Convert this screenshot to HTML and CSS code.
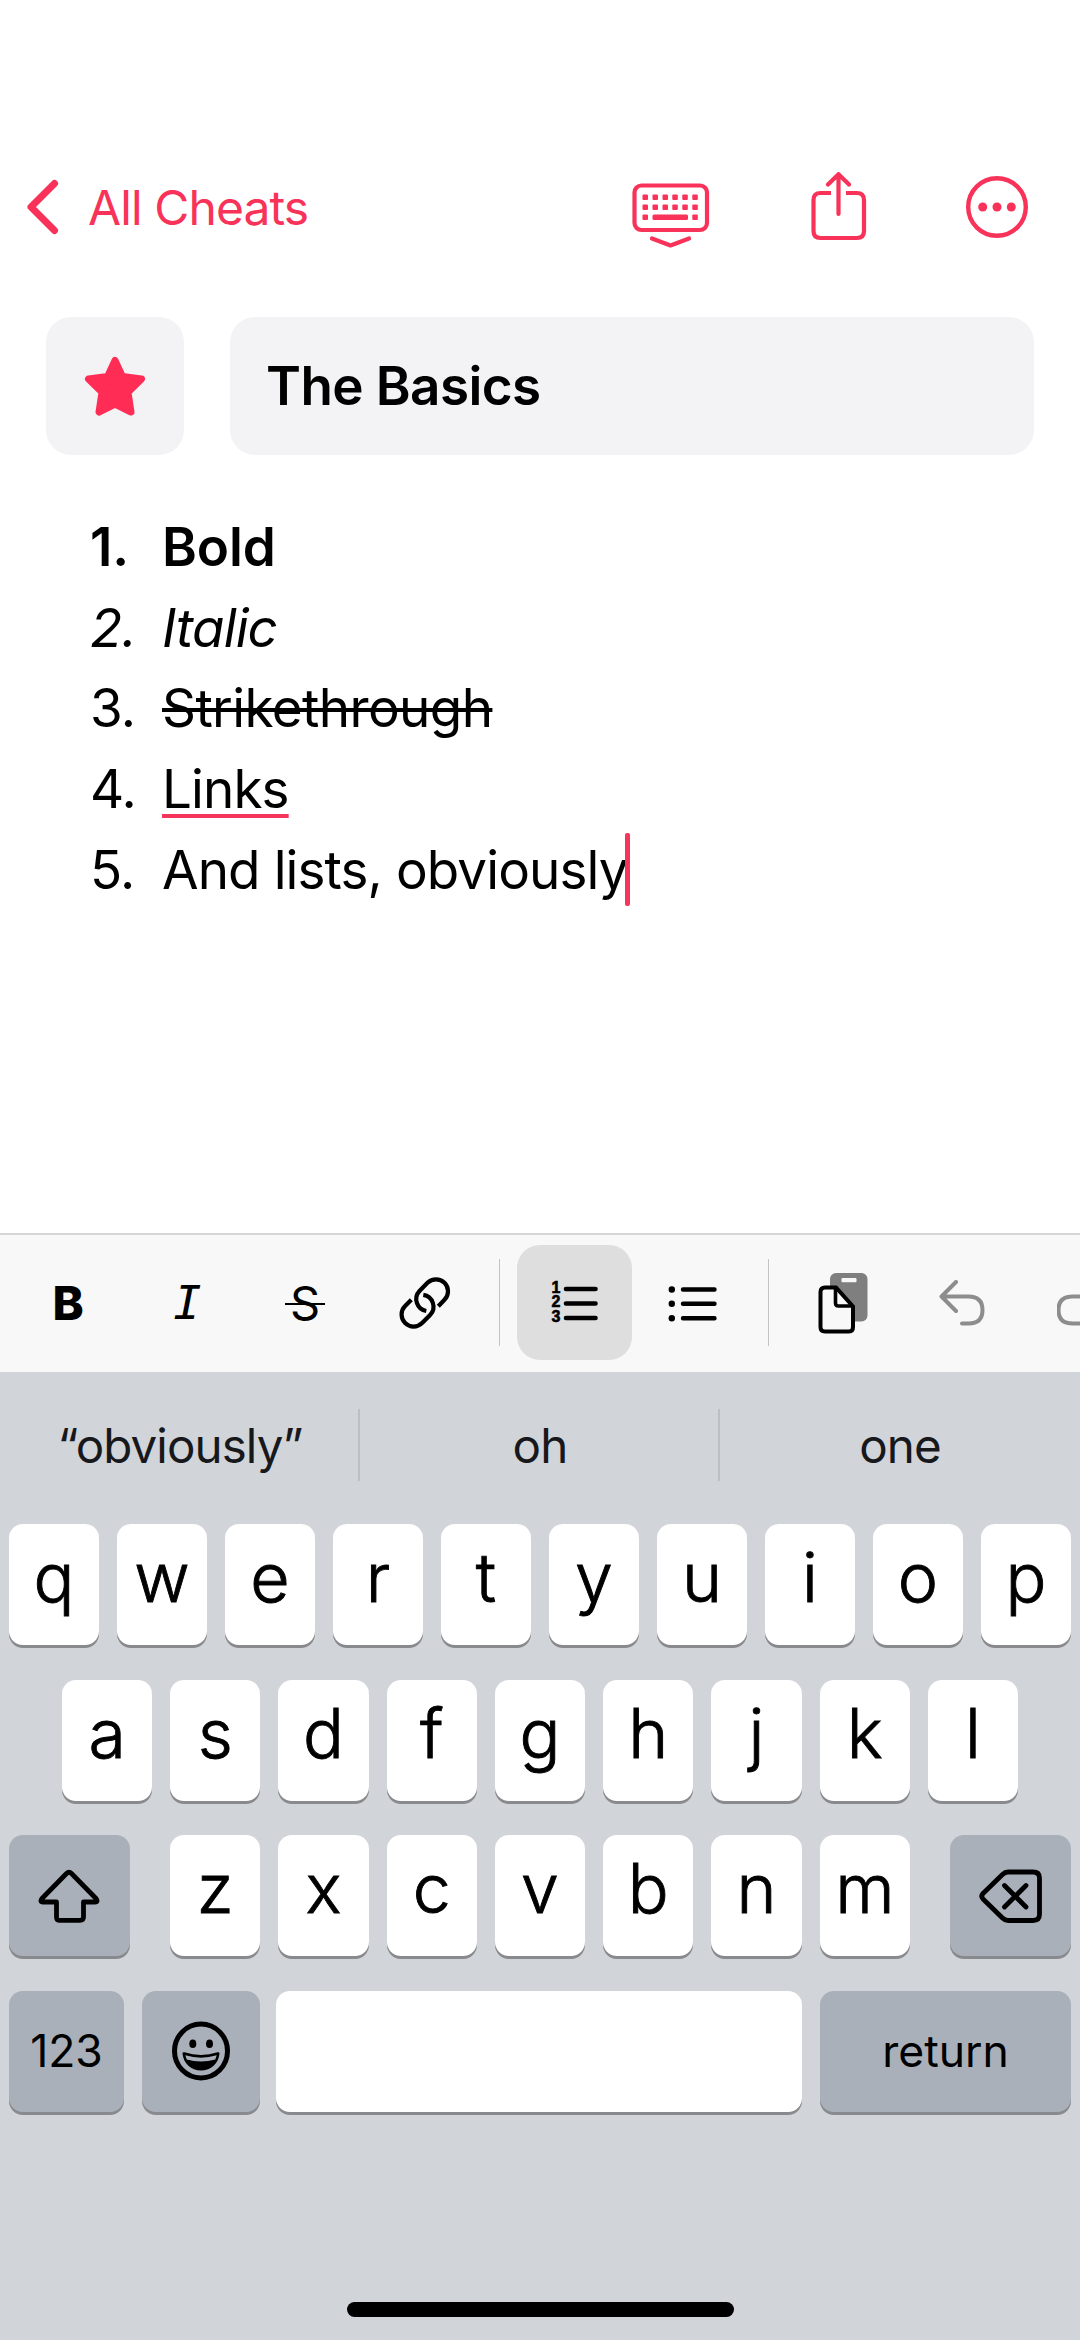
FILE: index.html
```html
<!DOCTYPE html>
<html lang="en">
<head>
<meta charset="utf-8">
<title>The Basics</title>
<link rel="stylesheet" href="styles.css">
</head>
<body>
<header class="nav">
  <a class="back">
    <svg width="32" height="56" viewBox="0 0 32 56" fill="none" stroke="currentColor" stroke-width="7" stroke-linecap="round" stroke-linejoin="round"><path d="M27.500 4.500 4 28l23.500 23.500"/></svg>
    <span class="back-label">All Cheats</span>
  </a>
  <div class="actions">
    <svg class="act-keyboard" width="78" height="66" viewBox="0 0 78 66" fill="none" stroke="currentColor" stroke-width="4.200" stroke-linecap="round" stroke-linejoin="round">
      <rect x="2.500" y="2.500" width="72.500" height="44.500" rx="7"/>
      <path d="M20 55.500l18.500 7 18.500-7"/>
      <g fill="currentColor" stroke="none">
        <rect x="10.500" y="11.500" width="5.500" height="5.500" rx="1"/><rect x="20.500" y="11.500" width="5.500" height="5.500" rx="1"/><rect x="30.500" y="11.500" width="5.500" height="5.500" rx="1"/><rect x="40.300" y="11.500" width="5.500" height="5.500" rx="1"/><rect x="50.300" y="11.500" width="5.500" height="5.500" rx="1"/><rect x="60.300" y="11.500" width="5.500" height="5.500" rx="1"/>
        <rect x="10.500" y="21.500" width="5.500" height="5.500" rx="1"/><rect x="20.500" y="21.500" width="5.500" height="5.500" rx="1"/><rect x="30.500" y="21.500" width="5.500" height="5.500" rx="1"/><rect x="40.300" y="21.500" width="5.500" height="5.500" rx="1"/><rect x="50.300" y="21.500" width="5.500" height="5.500" rx="1"/><rect x="60.300" y="21.500" width="5.500" height="5.500" rx="1"/>
        <rect x="10.500" y="31.500" width="5.500" height="5.500" rx="1"/><rect x="20.500" y="31.500" width="35.500" height="5.500" rx="1.500"/><rect x="60.300" y="31.500" width="5.500" height="5.500" rx="1"/>
      </g>
    </svg>
    <svg class="act-share" width="56" height="70" viewBox="0 0 56 70" fill="none" stroke="currentColor" stroke-width="4.200" stroke-linecap="round" stroke-linejoin="round">
      <path stroke-linecap="butt" d="M20 21H9.500Q2.500 21 2.500 28V59Q2.500 66 9.500 66H46Q53 66 53 59V28Q53 21 46 21H35"/>
      <path d="M27.500 42V2.200M17 12.500 27.500 2.200 38 12.500"/>
    </svg>
    <svg class="act-more" width="62" height="62" viewBox="0 0 62 62">
      <circle cx="31" cy="31" r="28.800" fill="none" stroke="currentColor" stroke-width="4.400"/>
      <g fill="currentColor"><circle cx="16.700" cy="31" r="4.500"/><circle cx="31" cy="31" r="4.500"/><circle cx="45.300" cy="31" r="4.500"/></g>
    </svg>
  </div>
</header>

<main class="note">
  <div class="title-row">
    <div class="fav">
      <svg width="62" height="62" viewBox="0 0 62 62"><path fill="currentColor" stroke="currentColor" stroke-width="7" stroke-linejoin="round" d="M31 5.500 38.400 21.500 57.500 24 44 37.300 47 57 31 49 15 57 18 37.300 4.500 24 23.600 21.500Z"/></svg>
    </div>
    <div class="title">The Basics</div>
  </div>
  <ol class="list">
    <li class="item bold"><span class="num">1.</span><span class="text">Bold</span></li>
    <li class="item italic"><span class="num">2.</span><span class="text">Italic</span></li>
    <li class="item"><span class="num">3.</span><span class="text strike">Strikethrough</span></li>
    <li class="item"><span class="num">4.</span><span class="text link">Links</span></li>
    <li class="item"><span class="num">5.</span><span class="text last">And lists, obviously</span><span class="caret"></span></li>
  </ol>
</main>

<div class="toolbar">
  <div class="tool glyph-b">B</div>
  <div class="tool glyph-i">I</div>
  <div class="tool glyph-s"><span class="s-mark">S</span></div>
  <div class="tool">
    <svg width="52" height="52" viewBox="0 0 52 52" fill="none" stroke="currentColor" stroke-width="4.200">
      <path d="M27.300 34A12 12 0 0 1 20.500 14L28.500 5.800A12 12 0 0 1 45.500 22.800L39.300 29.300"/>
      <path d="M24.300 17.800A12 12 0 0 1 31.100 38L23.100 46.100A12 12 0 0 1 6.100 29.100L12.300 22.700"/>
    </svg>
  </div>
  <div class="sep"></div>
  <div class="tool selected">
    <div class="digits"><span>1</span><span>2</span><span>3</span></div>
    <svg width="36" height="46" viewBox="0 0 36 46">
      <path d="M3 9H32.500M3 23.500H32.500M3 38H32.500" stroke="currentColor" stroke-width="4.600" stroke-linecap="round"/>
    </svg>
  </div>
  <div class="tool">
    <svg width="50" height="46" viewBox="0 0 50 46" fill="currentColor">
      <circle cx="3.800" cy="9.500" r="3.200"/><circle cx="3.800" cy="23.800" r="3.200"/><circle cx="3.800" cy="38.300" r="3.200"/>
      <path d="M15 9.500H46.500M15 23.800H46.500M15 38.300H46.500" stroke="currentColor" stroke-width="4.400" stroke-linecap="round"/>
    </svg>
  </div>
  <div class="sep"></div>
  <div class="tool">
    <svg width="50" height="62" viewBox="0 0 50 62" fill="none">
      <rect x="12" y="1" width="37.500" height="48.500" rx="6" fill="#7f7f7f"/>
      <rect x="23.500" y="6" width="15" height="4.200" rx="1" fill="#f8f8f8"/>
      <path d="M7 15.500H18L35 34.500V55Q35 59.500 31 59.500H7Q2.500 59.500 2.500 55V20Q2.500 15.500 7 15.500Z" fill="#f8f8f8" stroke="currentColor" stroke-width="4"/>
      <path d="M17.500 15.500V31Q17.500 34 20.500 34H35" stroke="currentColor" stroke-width="3.600"/>
    </svg>
  </div>
  <div class="tool muted">
    <svg width="46" height="46" viewBox="0 0 46 46" fill="none" stroke="currentColor" stroke-width="4" stroke-linecap="round" stroke-linejoin="round"><path d="M17 2 2.500 16.500 17 31M2.500 16.500H29.500Q43.500 16.500 43.500 30T29.500 43.500H23"/></svg>
  </div>
  <div class="tool muted">
    <svg width="46" height="46" viewBox="0 0 46 46" fill="none" stroke="currentColor" stroke-width="4" stroke-linecap="round" stroke-linejoin="round"><path d="M29 2 43.500 16.500 29 31M43.500 16.500H15.500Q1.500 16.500 1.500 30T15.500 43.500H23"/></svg>
  </div>
</div>

<section class="keyboard">
  <div class="suggest">
    <div class="word">“obviously”</div><div class="word">oh</div><div class="word">one</div>
  </div>
  <div class="rows">
    <div class="row"><div class="key">q</div><div class="key">w</div><div class="key">e</div><div class="key">r</div><div class="key">t</div><div class="key">y</div><div class="key">u</div><div class="key">i</div><div class="key">o</div><div class="key">p</div></div>
    <div class="row inset"><div class="key">a</div><div class="key">s</div><div class="key">d</div><div class="key">f</div><div class="key">g</div><div class="key">h</div><div class="key">j</div><div class="key">k</div><div class="key">l</div></div>
    <div class="row">
      <div class="key dark shift"><svg width="62" height="54" viewBox="0 0 62 54" fill="none" stroke="currentColor" stroke-width="4.800" stroke-linejoin="round"><path d="M28.500 4.500Q31 2 33.500 4.500L58 29.500Q60.500 33 57 33H45.500V48Q45.500 51.300 42 51.300H21Q18.500 51.300 18.500 48V33H5Q1.500 33 4 29.500Z"/></svg></div>
      <div class="key">z</div><div class="key">x</div><div class="key">c</div><div class="key">v</div><div class="key">b</div><div class="key">n</div><div class="key">m</div>
      <div class="key dark delete"><svg width="64" height="54" viewBox="0 0 64 54" fill="none" stroke="currentColor" stroke-width="4.800" stroke-linecap="round" stroke-linejoin="round"><path d="M29 3H54Q60.500 3 60.500 9V45.500Q60.500 51.500 54 51.500H29Q26 51.500 23.500 49L4 30Q1.500 27.200 4 24.500L23.500 5.500Q26 3 29 3Z"/><path d="M25.500 16.500 47 38M47 16.500 25.500 38"/></svg></div>
    </div>
    <div class="row">
      <div class="key dark num-key">123</div>
      <div class="key dark emoji"><svg width="60" height="60" viewBox="0 0 60 60"><ellipse cx="30" cy="30" rx="26.500" ry="27" fill="none" stroke="currentColor" stroke-width="5"/><ellipse cx="21.800" cy="22.800" rx="3.500" ry="4.300" fill="currentColor"/><ellipse cx="38.500" cy="22.800" rx="3.500" ry="4.300" fill="currentColor"/><path d="M11.500 32.500Q11.500 30.800 13.500 31.300Q30 36.500 46.500 31.300Q48.500 30.800 48.500 32.500C47.500 42.500 40 49.500 30 49.500S12.500 42.500 11.500 32.500Z" fill="currentColor"/><path d="M14.300 34.300Q30 39 45.700 34.300L44.300 38.500Q30 42.500 15.700 38.500Z" fill="#aab0ba"/></svg></div>
      <div class="key space"></div>
      <div class="key dark return">return</div>
    </div>
  </div>
  <div class="home"></div>
</section>
</body>
</html>
```

FILE: styles.css
```css
* { box-sizing: border-box; }
body {
  margin: 0;
  width: 1080px;
  height: 2340px;
  display: flex;
  flex-direction: column;
  background: #fff;
  color: #000;
  font-family: Inter, "Liberation Sans", sans-serif;
  overflow: hidden;
}
svg { display: block; flex: none; }

.nav {
  height: 317px;
  padding: 172px 52px 0 27px;
  display: flex;
  align-items: flex-start;
  justify-content: space-between;
  color: #f83259;
}
.back { display: flex; align-items: center; gap: 29px; height: 70px; }
.back-label { font-size: 48px; letter-spacing: -0.900px; }
.actions { display: flex; }
.act-keyboard { margin: 11px 101px 0 0; }
.act-share { margin-right: 99px; }
.act-more { margin-top: 4px; }

.note { height: 916px; padding: 0 46px; }
.title-row { display: flex; gap: 46px; height: 138px; }
.fav, .title { background: #f3f3f6; border-radius: 25px; }
.fav { width: 138px; display: flex; align-items: center; justify-content: center; color: #ff2d55; }
.title { flex: 1; padding-left: 36px; font-size: 53px; font-weight: 600; line-height: 138px; letter-spacing: -0.600px; }
.list { list-style: none; margin: 52px 0 0; padding: 0 0 0 44px; font-size: 53px; line-height: 80.650px; letter-spacing: -0.900px; }
.item { display: flex; height: 80.650px; }
.num { width: 72px; }
.bold { font-weight: 600; letter-spacing: -0.100px; }
.italic { font-style: italic; }
.strike { text-decoration: line-through; text-decoration-thickness: 4px; letter-spacing: -0.620px; }
.link { text-decoration: underline #f6355d 4px; text-underline-offset: 6px; text-decoration-skip-ink: none; }
.caret { width: 5px; height: 73px; margin: 3px 0 0 -3px; border-radius: 2px; background: #f6355d; }

.toolbar {
  height: 139px;
  padding: 10px 0 0 11.500px;
  display: flex;
  gap: 3.500px;
  overflow: hidden;
  border-top: 2px solid #d5d5d6;
  background: #f8f8f8;
}
.tool { flex: none; width: 115px; height: 115px; display: flex; align-items: center; justify-content: center; }
.selected { background: #dededf; border-radius: 23px; }
.sep { flex: none; width: 1px; height: 87px; margin: 14px 13.500px 0; background: #c3c3c5; }
.muted { color: #8d8d8e; }
.glyph-b { font-size: 47px; font-weight: 800; padding-right: 2px; }
.glyph-i { font-family: "DejaVu Sans Mono", monospace; font-style: oblique; font-size: 47px; }
.glyph-s { font-size: 47px; }
.s-mark { position: relative; left: -1px; }
.s-mark::after { content: ""; position: absolute; left: -5px; right: -5px; top: 50%; height: 2.500px; background: currentColor; }
.digits { display: grid; grid-auto-rows: 14.500px; width: 12px; margin-right: 1px; font-family: "Liberation Sans", Arial, sans-serif; font-size: 16px; font-weight: 700; line-height: 14.500px; text-align: center; -webkit-text-stroke: 0.600px currentColor; }

.keyboard { flex: 1; background: #d1d4d9; }
.suggest { height: 152px; display: grid; grid-template-columns: 360px 360px 1fr; color: #17181b; }
.word { font-size: 47.500px; line-height: 148px; text-align: center; letter-spacing: -0.900px; background: linear-gradient(#bbbec3, #bbbec3) no-repeat right 37px / 2px 72px; }
.word:last-child { background: none; }
.rows { display: flex; flex-direction: column; gap: 34.670px; }
.row { display: flex; gap: 18px; height: 121px; padding: 0 9px; }
.inset { padding: 0 62px; }
.key { flex: 1; height: 121px; border-radius: 14px; background: #fff; box-shadow: 0 3px 0 #898a8d; text-align: center; font-size: 68px; font-weight: 300; line-height: 106px; -webkit-text-stroke: 0.900px currentColor; }
.dark { flex: none; display: flex; align-items: center; justify-content: center; background: #aab0ba; font-size: 44.500px; font-weight: 400; line-height: 122px; -webkit-text-stroke: 0; }
.shift { width: 120.500px; margin-right: 22.500px; }
.delete { width: 120.500px; margin-left: 22.500px; }
.num-key { width: 115px; }
.emoji { width: 118px; }
.space { margin-left: -2px; }
.return { width: 251px; }
.home { width: 387px; height: 15px; margin: 190px auto 0; border-radius: 8px; background: #000; }
```
